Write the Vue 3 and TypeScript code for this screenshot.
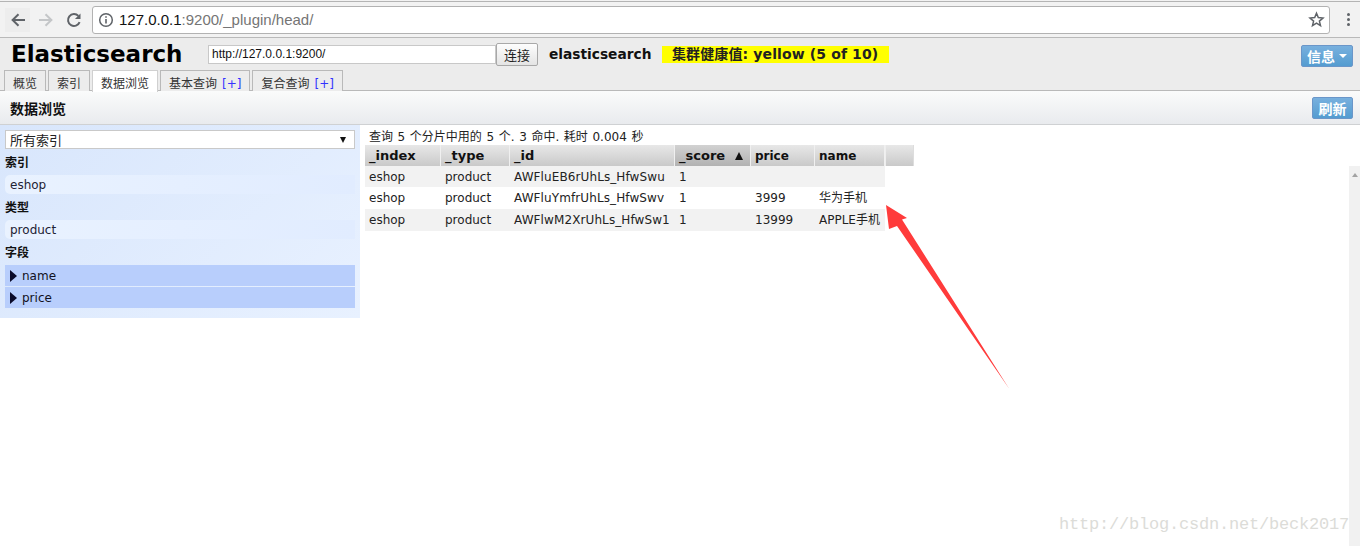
<script setup lang="ts">
interface Row { index: string; type: string; id: string; score: string; price: string; name: string }
const tabs: { label: string; plus?: boolean; active?: boolean }[] = [
  { label: '概览' },
  { label: '索引' },
  { label: '数据浏览', active: true },
  { label: '基本查询', plus: true },
  { label: '复合查询', plus: true },
]
const columns = [
  { label: '_index', width: 76 },
  { label: '_type', width: 69 },
  { label: '_id', width: 165 },
  { label: '_score', width: 76, sorted: true },
  { label: 'price', width: 64 },
  { label: 'name', width: 70 },
]
const rows: Row[] = [
  { index: 'eshop', type: 'product', id: 'AWFluEB6rUhLs_HfwSwu', score: '1', price: '', name: '' },
  { index: 'eshop', type: 'product', id: 'AWFluYmfrUhLs_HfwSwv', score: '1', price: '3999', name: '华为手机' },
  { index: 'eshop', type: 'product', id: 'AWFlwM2XrUhLs_HfwSw1', score: '1', price: '13999', name: 'APPLE手机' },
]
</script>

<template>
  <div class="page">
    <div class="tabstrip"></div>
    <div class="toolbar">
      <button class="nav nav-back" aria-label="back">
        <svg width="18" height="18" viewBox="0 0 18 18"><path d="M16 9H4M9.5 3.2 3.6 9l5.9 5.8" fill="none" stroke="#5f6368" stroke-width="2"/></svg>
      </button>
      <button class="nav" aria-label="forward">
        <svg width="18" height="18" viewBox="0 0 18 18"><path d="M2 9h12M8.5 3.2 14.4 9l-5.9 5.8" fill="none" stroke="#c4c6c8" stroke-width="2"/></svg>
      </button>
      <button class="nav" aria-label="reload">
        <svg width="18" height="18" viewBox="0 0 18 18"><path d="M14.6 11.2A6 6 0 1 1 13.4 4.9" fill="none" stroke="#5f6368" stroke-width="2"/><path d="M15.5 2.5v5.6H9.9z" fill="#5f6368"/></svg>
      </button>
      <div class="omnibox">
        <svg class="info" width="16" height="16" viewBox="0 0 16 16"><circle cx="8" cy="8" r="6.3" fill="none" stroke="#5f6368" stroke-width="1.5"/><path d="M7.2 7h1.6v4.6H7.2zM7.2 4.2h1.6v1.6H7.2z" fill="#5f6368"/></svg>
        <span class="url"><span class="host">127.0.0.1</span>:9200/_plugin/head/</span>
        <svg class="star" width="17" height="17" viewBox="0 0 17 17"><path d="M8.5 2.2 10.3 6.6l4.7.4-3.6 3.1 1.1 4.6-4-2.5-4 2.5 1.1-4.6L2 7l4.7-.4z" fill="none" stroke="#5f6368" stroke-width="1.5"/></svg>
      </div>
      <div class="kebab"><i></i><i></i><i></i></div>
    </div>

    <header class="head">
      <div class="head-row">
        <h1 class="brand">Elasticsearch</h1>
        <input class="conn" value="http://127.0.0.1:9200/" />
        <button class="connect">连接</button>
        <span class="cluster">elasticsearch</span>
        <span class="health">集群健康值: yellow (5 of 10)</span>
        <button class="blue info-btn">信息<i class="caret"></i></button>
      </div>
      <nav class="tabs">
        <span v-for="t in tabs" :key="t.label" class="tab" :class="{ active: t.active }">
          {{ t.label }}<span v-if="t.plus" class="plus">[+]</span>
        </span>
      </nav>
    </header>

    <div class="bar">
      <h2>数据浏览</h2>
      <button class="blue refresh">刷新</button>
    </div>

    <main class="main">
      <aside class="side">
        <div class="select"><span>所有索引</span><i class="down"></i></div>
        <div class="label first">索引</div>
        <div class="item">eshop</div>
        <div class="label">类型</div>
        <div class="item">product</div>
        <div class="label">字段</div>
        <div class="field"><i class="tri"></i>name</div>
        <div class="field"><i class="tri"></i>price</div>
      </aside>
      <section class="results">
        <div class="summary">查询 5 个分片中用的 5 个. 3 命中. 耗时 0.004 秒</div>
        <div class="thead">
          <div v-for="c in columns" :key="c.label" class="th" :class="{ sorted: c.sorted, meta: c.label.startsWith('_') }" :style="{ width: c.width + 'px' }">
            {{ c.label }}<i v-if="c.sorted" class="up"></i>
          </div>
          <div class="th filler"></div>
        </div>
        <div class="tbody-wrap">
          <div class="tbody">
            <div v-for="r in rows" :key="r.id" class="tr">
              <div class="td" :style="{ width: columns[0].width + 'px' }">{{ r.index }}</div>
              <div class="td" :style="{ width: columns[1].width + 'px' }">{{ r.type }}</div>
              <div class="td id" :style="{ width: columns[2].width + 'px' }">{{ r.id }}</div>
              <div class="td" :style="{ width: columns[3].width + 'px' }">{{ r.score }}</div>
              <div class="td" :style="{ width: columns[4].width + 'px' }">{{ r.price }}</div>
              <div class="td" :style="{ width: columns[5].width + 'px' }">{{ r.name }}</div>
            </div>
          </div>
          <div class="scroll"><i></i></div>
        </div>
      </section>
    </main>

    <svg class="arrow" width="140" height="195" viewBox="0 0 140 195">
      <path d="M6 5 L27 18 L22 19.5 L129 188.5 L17 26 L9 29 Z" fill="#ff3b3b"/>
    </svg>
    <div class="mark">http://blog.csdn.net/beck2017</div>
  </div>
</template>

<style>
html, body { margin: 0; overflow: hidden; background: #fff; }
</style>

<style scoped>
.page {
  position: relative;
  width: 1360px;
  height: 546px;
  display: flex;
  flex-direction: column;
  overflow: hidden;
  font-family: "DejaVu Sans", "Noto Sans CJK SC", sans-serif;
  font-size: 12px;
  color: #111;
  background: #fff;
}
.tabstrip {
  height: 1px;
  background: #f2f2f2;
  border-bottom: 1px solid #b4b4b4;
  box-sizing: content-box;
  flex: none;
}
.toolbar {
  flex: none;
  height: 36px;
  box-sizing: border-box;
  background: #f2f2f2;
  border-bottom: 1px solid #b9b9b9;
  display: flex;
  align-items: center;
  padding: 0 0 0 5px;
}
.nav {
  flex: none;
  width: 25px;
  height: 24px;
  padding: 0;
  margin-right: 3px;
  border: 0;
  background: transparent;
  display: flex;
  align-items: center;
  justify-content: center;
}
.nav-back { background: #ededed; }
.omnibox {
  flex: none;
  width: 1238px;
  height: 28px;
  margin-left: 3px;
  box-sizing: border-box;
  background: #fff;
  border: 1px solid #b2b2b2;
  border-radius: 3px;
  display: flex;
  align-items: center;
  padding: 0 4px 0 5px;
  font-family: "Liberation Sans", sans-serif;
  font-size: 15px;
  color: #757575;
}
.info { margin-right: 5px; }
.host { color: #111; }
.star { margin-left: auto; }
.kebab {
  margin-left: 17px;
  display: flex;
  flex-direction: column;
  gap: 2px;
}
.kebab i { width: 3px; height: 3px; background: #5f6368; border-radius: 50%; }

.head {
  flex: none;
  height: 53px;
  box-sizing: border-box;
  background: #ececec;
  border-bottom: 1px solid #b9b9b9;
  display: flex;
  flex-direction: column;
}
.head-row {
  height: 30px;
  display: flex;
  align-items: center;
  padding: 1px 7px 0 11px;
  flex: none;
}
.brand {
  margin: 0;
  font-size: 23px;
  line-height: 30px;
  font-weight: 700;
  color: #000;
  width: 197px;
  flex: none;
}
.conn {
  width: 288px;
  height: 19px;
  box-sizing: border-box;
  border: 1px solid #c8c8c8;
  padding: 0 3px;
  font-family: "Liberation Sans", sans-serif;
  font-size: 12px;
  color: #111;
  background: #fff;
  outline: none;
}
.connect {
  width: 42px;
  height: 23px;
  padding: 0;
  font: 13px "Noto Sans CJK SC", sans-serif;
  color: #222;
  background: linear-gradient(#fdfdfd, #e4e4e4);
  border: 1px solid #a8a8a8;
  border-radius: 2px;
}
.cluster {
  margin-left: 11px;
  font-size: 13.75px;
  font-weight: 700;
  width: 113px;
  color: #111;
}
.health {
  width: 227px;
  height: 17px;
  line-height: 17px;
  box-sizing: border-box;
  padding-left: 10px;
  background: #ff0;
  font-size: 14px;
  font-weight: 700;
  letter-spacing: .12px;
  color: #222;
  white-space: nowrap;
  overflow: hidden;
}
.blue {
  border: 1px solid #6a96c9;
  border-radius: 2px;
  background: linear-gradient(#78b0de, #549cd0);
  color: #fff;
  font: 700 14px "DejaVu Sans", "Noto Sans CJK SC", sans-serif;
  padding: 0;
}
.info-btn {
  margin-left: auto;
  width: 52px;
  height: 22px;
  margin-top: 3px;
  display: flex;
  align-items: center;
  justify-content: center;
  gap: 4px;
}
.caret {
  width: 0;
  height: 0;
  border-left: 4px solid transparent;
  border-right: 4px solid transparent;
  border-top: 4px solid #fff;
}
.tabs {
  flex: none;
  height: 22px;
  margin-top: auto;
  padding-left: 4px;
  display: flex;
  gap: 3px;
  align-items: flex-end;
}
.tab {
  height: 20px;
  line-height: 27px;
  padding: 0 8px;
  border: 1px solid #b9b9b9;
  border-bottom: 0;
  font-size: 12px;
  color: #333;
  background: #ececec;
  white-space: nowrap;
  margin-right: -1px;
  box-sizing: content-box;
  overflow: hidden;
}
.tab.active {
  background: #fff;
  border-color: #d0d0d0;
  position: relative;
  height: 21px;
  margin-bottom: -1px;
}
.plus { color: #33f; margin-left: 5px; }

.bar {
  flex: none;
  height: 34px;
  box-sizing: border-box;
  background: linear-gradient(#fafbfb, #e9ebee);
  border-bottom: 1px solid #cfd1d3;
  display: flex;
  align-items: center;
  justify-content: space-between;
  padding: 0 7px 0 10px;
}
.bar h2 { margin: 0; font-size: 14px; font-weight: 700; color: #111; }
.refresh { width: 41px; height: 22px; }

.main {
  flex: 1;
  min-height: 0;
  display: flex;
  align-items: stretch;
}
.side {
  flex: none;
  width: 360px;
  height: 193px;
  box-sizing: border-box;
  padding: 5px 5px 0;
  background: linear-gradient(135deg, #d8e6fc, #e8f1ff);
}
.select {
  height: 19px;
  box-sizing: border-box;
  background: #fff;
  border: 1px solid #c9c9c9;
  display: flex;
  align-items: center;
  justify-content: space-between;
  padding: 0 8px 0 4px;
  font-size: 13px;
  color: #222;
}
.down {
  width: 0;
  height: 0;
  border-left: 3.5px solid transparent;
  border-right: 3.5px solid transparent;
  border-top: 6px solid #111;
}
.label {
  height: 26px;
  line-height: 29px;
  font-weight: 700;
  font-size: 12px;
  color: #111;
}
.label.first { line-height: 28px; }
.item {
  height: 19px;
  line-height: 20px;
  padding-left: 5px;
  border-radius: 5px 0 0 5px;
  background: linear-gradient(90deg, #e9f2ff, #e1ecff);
  color: #223;
  font-size: 12px;
}
.field {
  height: 21px;
  margin-bottom: 1px;
  padding: 1px 0 0 5px;
  box-sizing: border-box;
  background: #b8cefc;
  color: #112;
  display: flex;
  align-items: center;
  font-size: 12px;
}
.tri {
  width: 0;
  height: 0;
  margin-right: 5px;
  border-top: 6px solid transparent;
  border-bottom: 6px solid transparent;
  border-left: 7px solid #0a0a2a;
}
.results {
  flex: 1;
  min-width: 0;
  padding-left: 5px;
  display: flex;
  flex-direction: column;
}
.summary {
  height: 20px;
  line-height: 24px;
  padding-left: 4px;
  font-size: 12px;
  word-spacing: .8px;
  color: #222;
  white-space: nowrap;
}
.thead { display: flex; flex: none; height: 21px; }
.th {
  flex: none;
  box-sizing: border-box;
  height: 21px;
  line-height: 22px;
  padding-left: 4px;
  font-weight: 700;
  font-size: 12px;
  color: #111;
  background: linear-gradient(#e8e8e8, #c9c9c9);
  border-right: 1px solid #f0f0f0;
  position: relative;
}
.th.meta { font-size: 13px; }
.th.sorted { background: linear-gradient(#d2d2d2, #b2b2b2); }
.th.filler { width: 29px; border-left: 1px solid #eee; border-right: 1px solid #ddd; }
.up {
  position: absolute;
  right: 7px;
  top: 7px;
  width: 0;
  height: 0;
  border-left: 4px solid transparent;
  border-right: 4px solid transparent;
  border-bottom: 8px solid #111;
}
.tbody-wrap { flex: 1; min-height: 0; display: flex; justify-content: space-between; }
.tr { display: flex; height: 22px; line-height: 22px; }
.tr:nth-child(odd) { background: #f2f2f2; }
.tr:first-child { height: 21px; }
.td {
  flex: none;
  box-sizing: border-box;
  padding-left: 4px;
  font-size: 12px;
  color: #222;
  white-space: nowrap;
  overflow: hidden;
}
.td.id { letter-spacing: .1px; }
.scroll {
  width: 11px;
  background: #f1f1f1;
  flex: none;
  display: flex;
  justify-content: center;
  padding-top: 7px;
  box-sizing: border-box;
}
.scroll i {
  width: 0;
  height: 0;
  border-left: 3px solid transparent;
  border-right: 3px solid transparent;
  border-bottom: 4px solid #a3a3a3;
}
.arrow { position: absolute; left: 880px; top: 200px; }
.mark {
  position: absolute;
  left: 1059px;
  top: 515px;
  font-family: "Liberation Mono", monospace;
  font-size: 17px;
  letter-spacing: -0.2px;
  color: #dcdcd8;
  white-space: nowrap;
}
</style>
